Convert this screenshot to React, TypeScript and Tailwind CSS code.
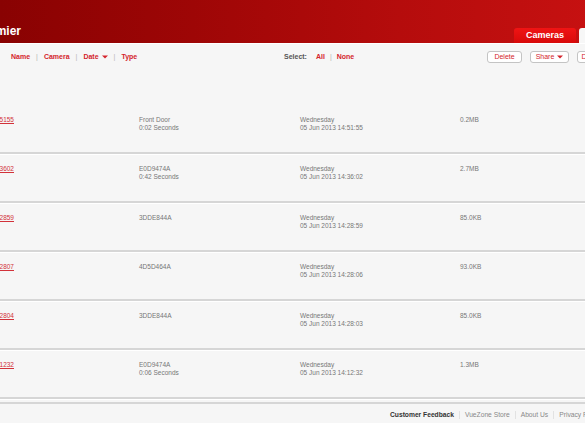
import { Fragment } from 'react';

type Clip = {
  file: string;
  camera: string;
  duration?: string;
  time: string;
  size: string;
};

const clips: Clip[] = [
  { file: 'VZ_20130605_145155', camera: 'Front Door', duration: '0:02 Seconds', time: '14:51:55', size: '0.2MB' },
  { file: 'VZ_20130605_143602', camera: 'E0D9474A', duration: '0:42 Seconds', time: '14:36:02', size: '2.7MB' },
  { file: 'VZ_20130605_142859', camera: '3DDE844A', time: '14:28:59', size: '85.0KB' },
  { file: 'VZ_20130605_142807', camera: '4D5D464A', time: '14:28:06', size: '93.0KB' },
  { file: 'VZ_20130605_142804', camera: '3DDE844A', time: '14:28:03', size: '85.0KB' },
  { file: 'VZ_20130605_141232', camera: 'E0D9474A', duration: '0:06 Seconds', time: '14:12:32', size: '1.3MB' },
];

function Caret() {
  return (
    <svg width="6" height="4" viewBox="0 0 6 4" className="ml-[3px]">
      <path d="M0 0.5H6L3 3.5Z" fill="currentColor" />
    </svg>
  );
}

function Pipe() {
  return <span className="text-[#b5b5b5] font-normal">|</span>;
}

function Header() {
  return (
    <div className="flex h-[43px] bg-gradient-to-r from-[#890202] via-[#b50c0c] to-[#da1616] shadow-[0_1px_0_#fff]">
      {/* logo text is cut off by the window edge */}
      <div className="mt-[24px] flex h-[14px] w-[21px] shrink-0 justify-end whitespace-nowrap text-[12px] font-bold leading-[14px] text-white">
        VueZone Premier
      </div>

      <div className="ml-[493px] flex shrink-0 items-end gap-[3px]">
        <div className="flex h-[15px] w-[62px] items-center justify-center rounded-t-[3px] bg-gradient-to-b from-[#f01414] to-[#d80a0a] text-[9px] font-bold text-white">
          Cameras
        </div>
        <div className="flex h-[15px] w-[60px] items-center justify-center rounded-t-[3px] bg-[#f7f7f7] text-[9px] font-bold text-[#c00]">
          Library
        </div>
      </div>
    </div>
  );
}

function Toolbar() {
  return (
    <div className="mt-[8px] flex h-[12px] items-center text-[7px] font-bold">
      <div className="flex w-[284px] shrink-0 items-center gap-[6px] pl-[11px] text-[#d4242c]">
        <span>Name</span>
        <Pipe />
        <span>Camera</span>
        <Pipe />
        <span className="flex items-center">
          Date
          <Caret />
        </span>
        <Pipe />
        <span>Type</span>
      </div>

      <div className="flex w-[203px] shrink-0 items-center gap-[5px]">
        <span className="mr-[4px] text-[#555]">Select:</span>
        <span className="text-[#d4242c]">All</span>
        <Pipe />
        <span className="text-[#d4242c]">None</span>
      </div>

      <div className="flex shrink-0 items-center gap-[8px] font-normal">
        <button className="flex h-[12px] w-[35px] items-center justify-center rounded-[3px] border border-[#c4c4c4] bg-white text-[7px] text-[#d4242c]">
          Delete
        </button>
        <button className="flex h-[12px] w-[39px] items-center justify-center rounded-[3px] border border-[#c4c4c4] bg-white text-[7px] text-[#d4242c]">
          Share
          <Caret />
        </button>
        <button className="flex h-[12px] w-[40px] items-center justify-center rounded-[3px] border border-[#c4c4c4] bg-white text-[7px] text-[#d4242c]">
          Download
        </button>
      </div>
    </div>
  );
}

function ClipRow({ clip }: { clip: Clip }) {
  return (
    <div className="flex h-[49px] border-b-2 border-[#d6d6d6] pt-[11px] text-[6.5px] leading-[7.5px] text-[#777] shadow-[0_1px_0_#fff]">
      <div className="w-[139px] shrink-0">
        <div className="flex w-[14px] justify-end whitespace-nowrap">
          <span className="text-[#d2323a] underline">{clip.file}</span>
        </div>
      </div>
      <div className="w-[161px] shrink-0">
        <div>{clip.camera}</div>
        {clip.duration && <div>{clip.duration}</div>}
      </div>
      <div className="w-[160px] shrink-0">
        <div>Wednesday</div>
        <div>05 Jun 2013 {clip.time}</div>
      </div>
      <div className="shrink-0">{clip.size}</div>
    </div>
  );
}

function Footer() {
  const links = ['VueZone Store', 'About Us', 'Privacy Policy'];
  return (
    <div className="mt-[3px] flex h-[24px] items-center border-t-2 border-[#d6d6d6] pl-[390px] text-[6.7px] whitespace-nowrap">
      <span className="font-bold text-[#333]">Customer Feedback</span>
      {links.map((l) => (
        <Fragment key={l}>
          <span className="mx-[5px] h-[8px] w-px shrink-0 bg-[#e2e2e2]" />
          <span className="text-[#888]">{l}</span>
        </Fragment>
      ))}
    </div>
  );
}

export default function App() {
  return (
    <div className="h-[423px] w-[585px] overflow-hidden bg-[#f6f6f6] font-['Liberation_Sans',Arial,sans-serif]">
      <div className="w-[800px]">
        <Header />
        <Toolbar />
        <div className="mt-[42px]">
          {clips.map((c) => (
            <ClipRow key={c.file} clip={c} />
          ))}
        </div>
        <Footer />
      </div>
    </div>
  );
}
